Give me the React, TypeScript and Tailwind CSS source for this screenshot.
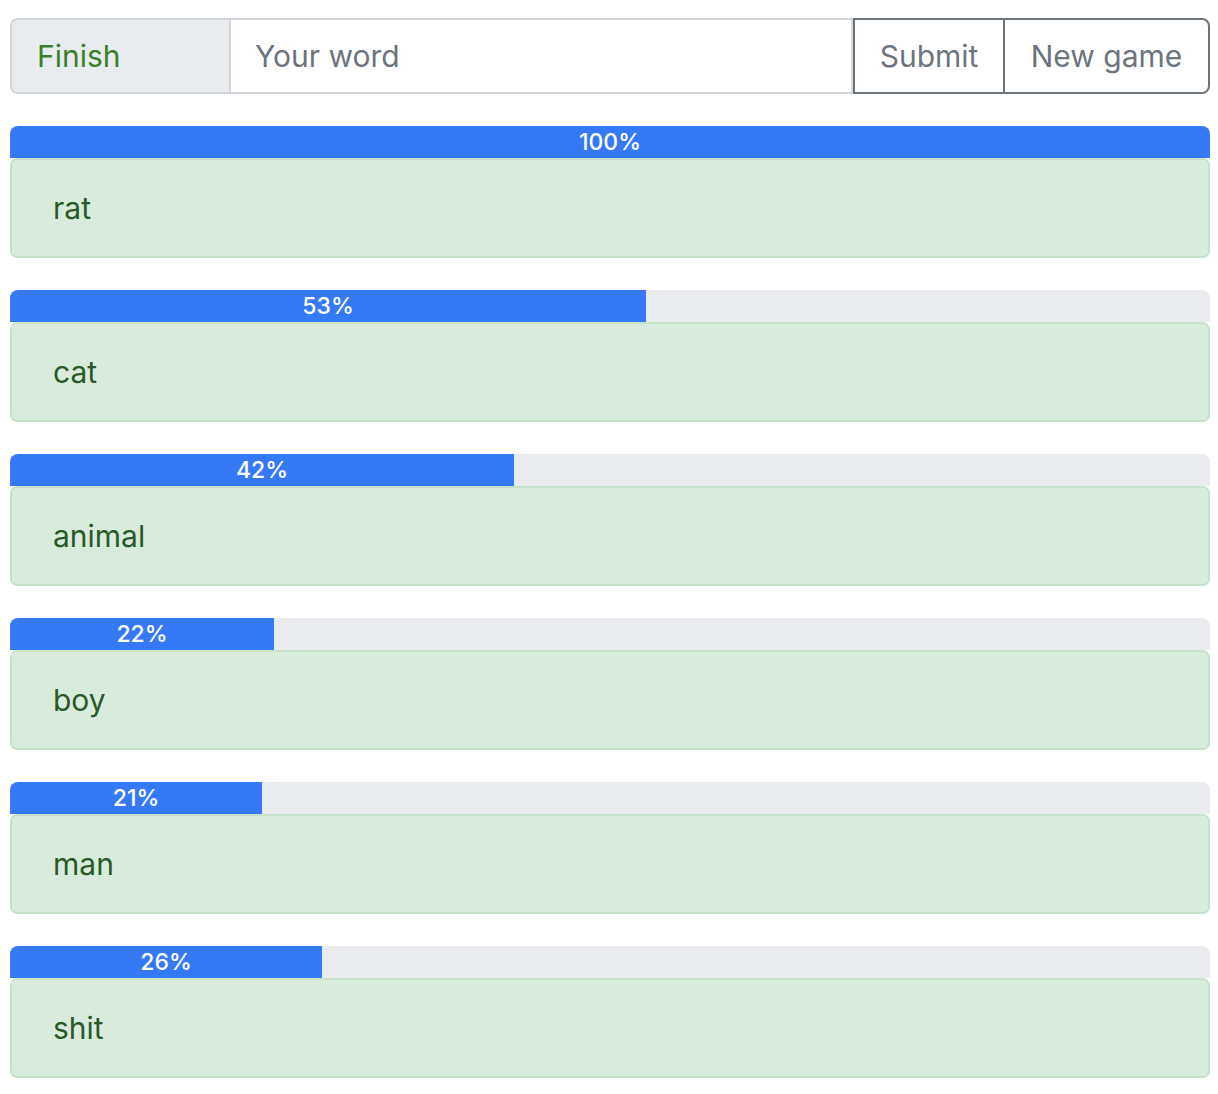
import React from "react";

const items = [
  { word: "rat", pct: 100 },
  { word: "cat", pct: 53 },
  { word: "animal", pct: 42 },
  { word: "boy", pct: 22 },
  { word: "man", pct: 21 },
  { word: "shit", pct: 26 },
];

export default function App() {
  return (
    <div
      className="w-[1218px] min-h-[1094px] bg-white pl-[10px] pr-[8px] pt-[18px]"
      style={{ fontFamily: "Inter, 'Liberation Sans', sans-serif" }}
    >
      <div className="flex h-[76px] w-full">
        <div className="flex w-[219px] items-center rounded-l-[8px] border-2 border-r-0 border-[#d3d7dc] bg-[#e9ecef] pl-[25px] text-[30px] text-[#3b7f2a]">
          Finish
        </div>
        <div className="flex flex-1 items-center border-2 border-[#d3d7dc] bg-white pl-[24px] text-[30px] text-[#6c737b]">
          Your word
        </div>
        <div className="flex w-[152px] items-center justify-center border-2 border-[#6c757d] text-[30px] text-[#6c757d]">
          Submit
        </div>
        <div className="flex w-[205px] items-center justify-center rounded-r-[8px] border-2 border-l-0 border-[#6c757d] text-[30px] text-[#6c757d]">
          New game
        </div>
      </div>
      <div className="mt-[32px] flex flex-col gap-[32px]">
        {items.map((it) => (
          <div key={it.word} className="flex flex-col">
            <div className="flex h-[32px] w-full overflow-hidden rounded-t-[8px] bg-[#e9ebee]">
              <div
                className="flex h-full items-center justify-center bg-[#3679f6] text-[23px] font-medium text-white"
                style={{ width: `${it.pct}%` }}
              >
                {it.pct}%
              </div>
            </div>
            <div className="flex h-[100px] items-center rounded-[7px] border-2 border-[#c6e2cb] bg-[#d9ebdc] pl-[41px] text-[30px] text-[#285a28]">
              {it.word}
            </div>
          </div>
        ))}
      </div>
    </div>
  );
}
